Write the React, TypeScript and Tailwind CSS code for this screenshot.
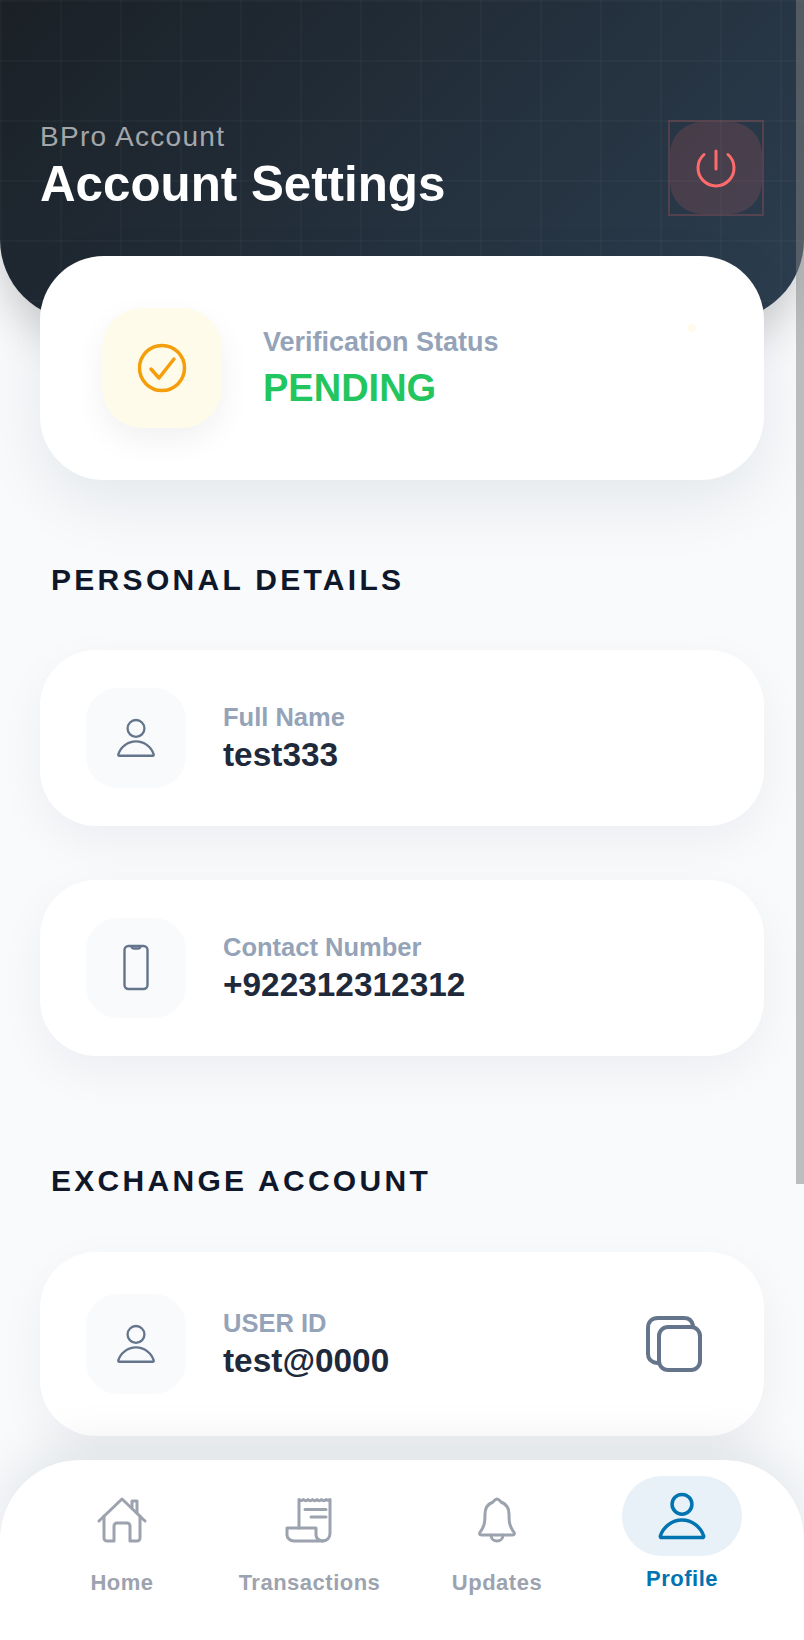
import React from "react";

const Person = ({ color, size = 46, sw = 2.4, r = 8.8 }: { color: string; size?: number; sw?: number; r?: number }) => (
  <svg width={size} height={size} viewBox="0 -1 48 48" fill="none" stroke={color} strokeWidth={sw} strokeLinecap="round" strokeLinejoin="round">
    <circle cx="24" cy="13" r={r} />
    <path d="M6.5 41.5c-.8 0-1.3-.6-1-1.4C7.6 33 15 26.5 24 26.5s16.400 6.500 18.500 13.600c.3.800-.2 1.400-1 1.400z" />
  </svg>
);

const Row = ({ icon, label, value, right, h = "h-[176px]" }: { icon: React.ReactNode; label: string; value: string; right?: React.ReactNode; h?: string }) => (
  <div className={`${h} rounded-[56px] bg-white pl-[46px] pr-[62px] flex items-center shadow-[0_16px_48px_rgba(15,23,42,0.05)]`}>
    <div className="w-[100px] h-[100px] rounded-[32px] bg-[#f8fafc] flex items-center justify-center">{icon}</div>
    <div className="ml-[37px] flex-1">
      <div className="text-[25.5px] leading-[34px] mb-[1px] mt-[-1px] font-bold text-[#94a3b8]">{label}</div>
      <div className="text-[33.4px] leading-[40px] font-bold text-[#1e293b]">{value}</div>
    </div>
    {right}
  </div>
);

const Heading = ({ children, cls }: { children: React.ReactNode; cls: string }) => (
  <h2 className={`${cls} pl-[11px] text-[30px] leading-[36px] font-bold tracking-[3.3px] text-[#0f172a]`}>{children}</h2>
);

const NavItem = ({ icon, label }: { icon: React.ReactNode; label: string }) => (
  <div className="flex flex-col items-center">
    <div className="h-[88px] flex items-center justify-center">{icon}</div>
    <div className="mt-[5px] text-[22px] leading-[28px] tracking-[0.5px] font-bold text-[#9ca3af]">{label}</div>
  </div>
);

export default function App() {
  return (
    <div className="relative w-[804px] h-[1640px] overflow-hidden bg-[#f8fafc] font-['Liberation_Sans',Arial,sans-serif]">
      <header className="h-[320px] rounded-b-[80px] shadow-[0_16px_48px_rgba(0,0,0,0.2)] px-[40px] pt-[120px] flex justify-between items-start bg-[linear-gradient(rgba(255,255,255,0.025)_2px,transparent_2px),linear-gradient(90deg,rgba(255,255,255,0.025)_2px,transparent_2px),linear-gradient(135deg,#1a2026,#2c3e50)] [background-size:60px_60px,60px_60px,100%_100%]">
        <div>
          <div className="text-[28px] leading-[34px] tracking-[1.3px] text-white/60">BPro Account</div>
          <h1 className="mt-[2px] text-[49.3px] leading-[56px] font-bold text-white">Account Settings</h1>
        </div>
        <button className="w-[96px] h-[96px] border-2 border-[#ff6b6b]/20 bg-transparent flex items-center justify-center">
          <span className="w-[92px] h-[92px] rounded-[32px] bg-[#ff6b6b]/15 flex items-center justify-center">
            <svg width="48" height="48" viewBox="0 0 48 48" fill="none" stroke="#ff6b6b" strokeWidth="3" strokeLinecap="round">
              <path d="M12 10.500A18 18 0 1 0 36 10.500" />
              <path d="M24 7V25" />
            </svg>
          </span>
        </button>
      </header>

      <main className="px-[40px] mt-[-64px]">
        <section className="relative h-[224px] rounded-[64px] bg-white pl-[62px] flex items-center shadow-[0_24px_64px_rgba(15,23,42,0.08)]">
          <div className="w-[120px] h-[120px] rounded-[40px] bg-[#fffbeb] flex items-center justify-center shadow-[0_12px_32px_rgba(15,23,42,0.06)]">
            <svg width="52" height="52" viewBox="0 0 52 52" fill="none" stroke="#f59e0b" strokeWidth="3.500" strokeLinecap="round" strokeLinejoin="round">
              <circle cx="26" cy="26" r="22.500" />
              <path d="M15 27l8 9 15-19" />
            </svg>
          </div>
          <div className="ml-[41px] pt-[3px]">
            <div className="text-[27px] leading-[34px] mt-[-4px] mb-[7px] font-bold text-[#94a3b8]">Verification Status</div>
            <div className="text-[38px] leading-[44px] font-bold text-[#22c55e]">PENDING</div>
          </div>
          <span className="absolute left-[648px] top-[68px] w-[8px] h-[8px] rounded-full bg-[#fffbeb]" />
        </section>

        <Heading cls="mt-[82px]">PERSONAL DETAILS</Heading>
        <div className="mt-[52px] flex flex-col gap-[54px]">
          <Row icon={<Person color="#64748b" />} label="Full Name" value="test333" />
          <Row
            label="Contact Number"
            value="+922312312312"
            icon={
              <svg width="48" height="48" viewBox="0 0 48 48" fill="none" stroke="#64748b" strokeWidth="2.400" strokeLinecap="round" strokeLinejoin="round">
                <rect x="12.500" y="2" width="23" height="43" rx="4" />
                <path d="M19.500 2.500c.5 1.500 1 2 2 2h5c1 0 1.500-.5 2-2" />
              </svg>
            }
          />
        </div>

        <Heading cls="mt-[107px]">EXCHANGE ACCOUNT</Heading>
        <div className="mt-[53px]">
          <Row
            h="h-[184px]"
            icon={<Person color="#64748b" />}
            label="USER ID"
            value="test@0000"
            right={
              <svg width="56" height="56" viewBox="0 0 56 56" fill="none" stroke="#64748b" strokeWidth="4" strokeLinecap="round" strokeLinejoin="round">
                <rect x="13" y="11" width="41" height="43" rx="9" />
                <path d="M47 9.500C46 4.500 43 2 38 2H12C6 2 2 6 2 12v26c0 5 3 8 9 9" />
              </svg>
            }
          />
        </div>
      </main>

      <nav className="absolute left-0 right-0 bottom-0 h-[180px] rounded-t-[80px] bg-white shadow-[0_-16px_48px_rgba(15,23,42,0.08)] pl-[28px] pt-[16px] grid grid-cols-[188px_187px_188px_182px] items-start">
        <NavItem
          label="Home"
          icon={
            <svg width="50" height="46" viewBox="0 0 50 46" fill="none" stroke="#9ca3af" strokeWidth="3" strokeLinecap="round" strokeLinejoin="round">
              <path d="M2 24L25 2l23 22" />
              <path d="M7 19v22a3 3 0 0 0 3 3h7V29a3 3 0 0 1 3-3h10a3 3 0 0 1 3 3v15h7a3 3 0 0 0 3-3V19" />
              <path d="M35 11V4h5v12" />
            </svg>
          }
        />
        <NavItem
          label="Transactions"
          icon={
            <svg width="50" height="46" viewBox="0 0 50 46" fill="none" stroke="#9ca3af" strokeWidth="3" strokeLinecap="round" strokeLinejoin="round">
              <path d="M14 31V2.500c2 1.500 3 1.500 4.500 0 1.500 1.500 3 1.500 4.500 0 1.500 1.500 3 1.500 4.500 0 1.500 1.500 3 1.500 4.500 0 1.500 1.500 3 1.500 4.500 0 1.500 1.500 3 1.500 4.500 0 1.500 1 2.500 1 4 0V36c0 5-3 8-8 8" />
              <path d="M20 12.500h21M26 20h15" />
              <path d="M2 31h29v7c0 3 3 6 7 6H9c-4 0-7-3-7-6z" />
            </svg>
          }
        />
        <NavItem
          label="Updates"
          icon={
            <svg width="42" height="46" viewBox="0 0 42 46" fill="none" stroke="#9ca3af" strokeWidth="3" strokeLinecap="round" strokeLinejoin="round">
              <path d="M21 2c2 0 3 2 4 3 5 2 8 6 8 12 0 6 0 11 4 17 2 2 2 4-1 4H6c-3 0-3-2-1-4 4-6 4-11 4-17 0-6 3-10 8-12 1-1 2-3 4-3z" />
              <path d="M15 38c0 4 3 6 6 6s6-2 6-6" />
            </svg>
          }
        />
        <div className="flex flex-col items-center">
          <div className="w-[120px] h-[80px] rounded-[40px] bg-[#e8f0f8] flex items-center justify-center">
            <Person color="#0073b1" size={56} sw={3} r={8.500} />
          </div>
          <div className="mt-[9px] text-[22px] leading-[28px] tracking-[0.5px] font-bold text-[#0073b1]">Profile</div>
        </div>
      </nav>

      <div className="absolute right-0 top-0 w-[8px] h-[1184px] bg-[#808080]/50" />
    </div>
  );
}
